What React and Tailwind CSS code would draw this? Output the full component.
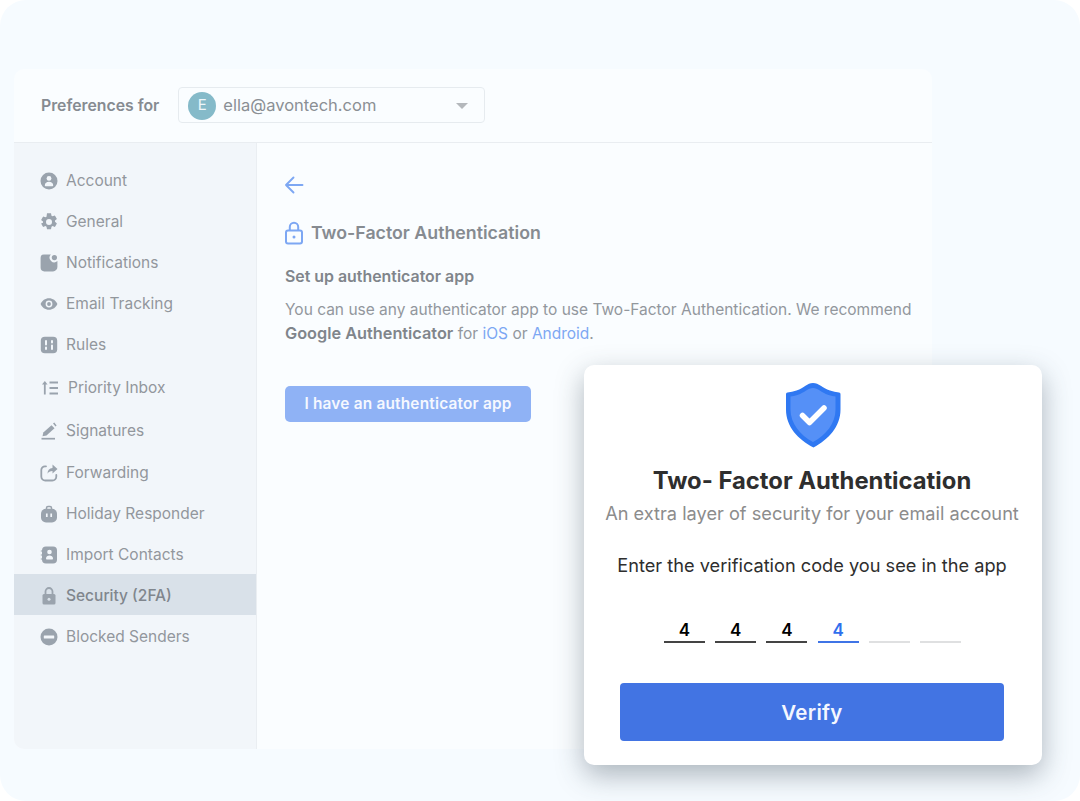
import React from 'react';

const Account = () => (
  <svg viewBox="0 0 18 18" className="w-[18px] h-[18px]">
    <circle cx="9" cy="9" r="8.500" fill="#9aa3ad" />
    <circle cx="9" cy="6.400" r="2.400" fill="#f2f6fa" />
    <path d="M4.800 13.200c0-2.200 1.900-3.400 4.200-3.400s4.200 1.200 4.200 3.400c0 .6-.4 1-1 1H5.800c-.6 0-1-.4-1-1z" fill="#f2f6fa" />
  </svg>
);

const Gear = () => (
  <svg viewBox="0 0 18 18" className="w-[18px] h-[18px]">
    <path fillRule="evenodd" fill="#9aa3ad" d="M7 .2h4l.5 2.500 1 .6 2.400-.8 2 3.400-1.900 1.700v1.200l1.900 1.700-2 3.400-2.400-.8-1 .6-.5 2.500H7l-.5-2.500-1-.6-2.400.8-2-3.400L3 9.800V8.600L1.100 6.900l2-3.400 2.400.8 1-.6zM9 6a3 3 0 1 0 0 6 3 3 0 0 0 0-6z" />
  </svg>
);

const Bell = () => (
  <svg viewBox="0 0 18 18" className="w-[18px] h-[18px]">
    <path fill="#9aa3ad" d="M4 .6h6.900A4.600 4.600 0 0 0 17.400 7.100V13a4.400 4.400 0 0 1-4.400 4.400H4.400A3.800 3.800 0 0 1 .6 13.600V4A3.400 3.400 0 0 1 4 .6z" />
    <circle cx="14.400" cy="3.600" r="2.600" fill="#9aa3ad" />
  </svg>
);

const Eye = () => (
  <svg viewBox="0 0 18 18" className="w-[18px] h-[18px]">
    <path fillRule="evenodd" fill="#9aa3ad" d="M9 3.200c3.800 0 7 2.400 8.400 5.800-1.400 3.400-4.600 5.800-8.400 5.800S2 12.400.6 9C2 5.600 5.200 3.200 9 3.200zm0 2.400a3.400 3.400 0 1 0 0 6.800 3.400 3.400 0 0 0 0-6.800zm0 1.500a1.900 1.900 0 1 1 0 3.800 1.900 1.900 0 0 1 0-3.800z" />
  </svg>
);

const Rules = () => (
  <svg viewBox="0 0 18 18" className="w-[18px] h-[18px]">
    <rect x="0.800" y="0.800" width="16.400" height="16.400" rx="4" fill="#9aa3ad" />
    <path d="M6 5v3.500M12 9.500V13" stroke="#f2f6fa" strokeWidth="2" strokeLinecap="round" />
    <path d="M6 11.500v1.500M12 5v1.500" stroke="#f2f6fa" strokeWidth="2" strokeLinecap="round" />
  </svg>
);

const Priority = () => (
  <svg viewBox="0 0 18 18" className="w-[18px] h-[18px]">
    <path d="M3.800 15.500V4" stroke="#9aa3ad" strokeWidth="1.800" />
    <path d="M1 5.500L3.800 2l2.800 3.500z" fill="#9aa3ad" />
    <path d="M8.500 3.500h8.500M8.500 9h8.500M8.500 14.500h8.500" stroke="#9aa3ad" strokeWidth="2" />
  </svg>
);

const Pen = () => (
  <svg viewBox="0 0 18 18" className="w-[18px] h-[18px]">
    <path fill="#9aa3ad" d="M11.500 3.200l3 3-8 7.300-4 .8.800-3.800z" />
    <path d="M13 1.600l1.300-1 2.300 2.900-1.100 1z" fill="#9aa3ad" />
    <path d="M1.500 16.700h13.500" stroke="#9aa3ad" strokeWidth="1.700" />
  </svg>
);

const Forward = () => (
  <svg viewBox="0 0 18 18" className="w-[18px] h-[18px]">
    <path d="M6 2.300H5A3.700 3.700 0 0 0 1.300 6v6.500A4 4 0 0 0 5.300 16.500h7a4 4 0 0 0 4-4v-1.500" fill="none" stroke="#9aa3ad" strokeWidth="1.800" strokeLinecap="round" />
    <path fill="#9aa3ad" d="M12.500 0.600l5 4.400-5 4.400V7c-2.500 0-4 .8-5 2.800 0-3.500 1.800-5.600 5-5.800z" />
  </svg>
);

const Bag = () => (
  <svg viewBox="0 0 18 18" className="w-[18px] h-[18px]">
    <path d="M6.500 4.500V3a1.500 1.500 0 0 1 1.500-1.500h2A1.500 1.500 0 0 1 11.500 3v1.500" fill="none" stroke="#9aa3ad" strokeWidth="1.500" />
    <rect x="1" y="3.800" width="16" height="13.700" rx="5" fill="#9aa3ad" />
    <path d="M6.800 8.500v3.500M11.200 8.500v3.500" stroke="#f2f6fa" strokeWidth="1.700" />
  </svg>
);

const Contacts = () => (
  <svg viewBox="0 0 18 18" className="w-[18px] h-[18px]">
    <rect x="2" y="0.500" width="15" height="17" rx="4" fill="#9aa3ad" />
    <path d="M0.800 5h2M0.800 9h2M0.800 13h2" stroke="#9aa3ad" strokeWidth="1.200" />
    <circle cx="9.500" cy="6" r="2.300" fill="#f2f6fa" />
    <path d="M6 12.600c0-2 1.600-3.200 3.500-3.200s3.500 1.200 3.500 3.200c0 .6-.3.900-.8.900H6.800c-.5 0-.8-.3-.8-.9z" fill="#f2f6fa" />
  </svg>
);

const Lock = () => (
  <svg viewBox="0 0 18 18" className="w-[18px] h-[18px]">
    <path d="M5.500 7.500V4.500a3.500 3.500 0 0 1 7 0v3" fill="none" stroke="#9aa3ad" strokeWidth="1.800" />
    <rect x="2.500" y="7" width="13" height="10.500" rx="1.500" fill="#9aa3ad" />
    <circle cx="9" cy="12.200" r="1.500" fill="#d9e1e9" />
  </svg>
);

const Blocked = () => (
  <svg viewBox="0 0 18 18" className="w-[18px] h-[18px]">
    <circle cx="9" cy="9" r="8.500" fill="#9aa3ad" />
    <rect x="3.800" y="7.500" width="10.400" height="3" rx="0.500" fill="#f2f6fa" />
  </svg>
);

const menu = [
  { label: 'Account', icon: <Account />, h: 'h-[41px]' },
  { label: 'General', icon: <Gear />, h: 'h-[41px]' },
  { label: 'Notifications', icon: <Bell />, h: 'h-[41px]' },
  { label: 'Email Tracking', icon: <Eye />, h: 'h-[41px]' },
  { label: 'Rules', icon: <Rules />, h: 'h-[41px]' },
  { label: 'Priority Inbox', icon: <Priority />, h: 'h-[45px]', gap: 'pl-[27px]' },
  { label: 'Signatures', icon: <Pen />, h: 'h-[42px]' },
  { label: 'Forwarding', icon: <Forward />, h: 'h-[41px]' },
  { label: 'Holiday Responder', icon: <Bag />, h: 'h-[41px]' },
  { label: 'Import Contacts', icon: <Contacts />, h: 'h-[41px]' },
  { label: 'Security (2FA)', icon: <Lock />, h: 'h-[41px]', active: true },
  { label: 'Blocked Senders', icon: <Blocked />, h: 'h-[41px]' },
];

const code = [
  { v: '4', line: 'bg-[#444]', text: 'text-black' },
  { v: '4', line: 'bg-[#444]', text: 'text-black' },
  { v: '4', line: 'bg-[#444]', text: 'text-black' },
  { v: '4', line: 'bg-[#3f74e6]', text: 'text-[#2f6fed]' },
  { v: '', line: 'bg-[#dfe0e1]', text: 'text-black' },
  { v: '', line: 'bg-[#dfe0e1]', text: 'text-black' },
];

export default function App() {
  return (
    <div className="w-[1080px] h-[801px] bg-white overflow-hidden font-['Inter',sans-serif]">
      <div className="relative w-full h-full rounded-[26px] bg-[#f6fbff] pt-[69px] pl-[14px]">
        {/* settings window, washed out behind the dialog */}
        <div className="w-[918px] h-[680px] rounded-[10px] bg-[#fafdff] overflow-hidden flex flex-col">
          <div className="h-[74px] shrink-0 border-b border-[#e9edf1] flex items-center pl-[27px]">
            <span className="text-[15.8px] font-semibold text-[#868b91]">Preferences for</span>
            <div className="ml-[19px] -mt-[1px] w-[307px] h-[36px] rounded-[4px] border border-[#e6ebef] flex items-center pl-[9px] pt-[1px]">
              <span className="w-[28px] h-[28px] rounded-full bg-[#85bac9] text-[#eef7fa] text-[15px] flex items-center justify-center">E</span>
              <span className="ml-[7px] text-[16.5px] text-[#8a8f94]">ella@avontech.com</span>
              <span className="ml-auto mr-[16px] w-0 h-0 border-l-[6px] border-r-[6px] border-t-[6px] border-l-transparent border-r-transparent border-t-[#b4b8bc]" />
            </div>
          </div>
          <div className="flex flex-1">
            <div className="w-[243px] shrink-0 bg-[#f2f6fa] border-r border-[#eaeef2] pt-[16px]">
              {menu.map((item) => (
                <div
                  key={item.label}
                  className={`flex items-center pt-[2px] ${item.h} ${item.gap || 'gap-[8px] pl-[26px]'} ${item.active ? 'bg-[#d9e1e9] font-medium text-[#80868d]' : 'text-[#92979d]'} text-[15.5px]`}
                >
                  {item.icon}
                  <span className={item.gap ? 'ml-[9px]' : ''}>{item.label}</span>
                </div>
              ))}
            </div>
            <div className="flex-1 pl-[28px] pt-[32px]">
              <svg viewBox="0 0 20 20" className="w-[20px] h-[20px] block -ml-[1px]" fill="none" stroke="#7da7f3" strokeWidth="1.900" strokeLinecap="round" strokeLinejoin="round">
                <path d="M18.500 10H2M9.500 2.500L2 10l7.500 7.500" />
              </svg>
              <div className="flex items-center mt-[25px] h-[26px]">
                <svg viewBox="0 0 18 24" className="w-[18px] h-[24px]" fill="none" stroke="#7da7f3" strokeWidth="2">
                  <path d="M4.800 9.500V6a4.200 4.200 0 0 1 8.400 0v3.500" />
                  <rect x="1" y="9.500" width="16" height="13" rx="2" />
                  <circle cx="9" cy="16" r="1.500" fill="#7da7f3" stroke="none" />
                </svg>
                <span className="ml-[8px] text-[17.75px] font-semibold text-[#868b91]">Two-Factor Authentication</span>
              </div>
              <div className="mt-[19px] text-[15.9px] font-semibold text-[#80858b]">Set up authenticator app</div>
              <p className="mt-[9px] w-[640px] text-[15.5px] leading-[24px] text-[#92979d]">
                You can use any authenticator app to use Two-Factor Authentication. We recommend{' '}
                <span className="text-[16.3px] leading-[22px] font-semibold text-[#80858b]">Google Authenticator</span> for{' '}
                <span className="text-[#7da7f3]">iOS</span> or <span className="text-[#7da7f3]">Android</span>.
              </p>
              <button className="mt-[40px] w-[246px] h-[36px] rounded-[5px] bg-[#8fb2f5] text-[15.4px] font-semibold tracking-[0.2px] text-[#f5f8ff]">
                I have an authenticator app
              </button>
            </div>
          </div>
        </div>

        {/* verification dialog */}
        <div className="absolute left-[584px] top-[365px] w-[458px] h-[400px] rounded-[10px] bg-white shadow-[0_10px_28px_rgba(50,65,80,0.38)] flex flex-col items-center pt-[17px] pr-[2px]">
          <svg viewBox="0 0 56 66" className="w-[56px] h-[66px] ml-[2px]">
            <path fill="#2f78f2" d="M28 1c6 0 9 5 17 7.500 3 1 6 1.500 9 2 1 .2 1.500.8 1.500 2v15c0 17-12 30-27 38C13 57.500 1 44.500 1 27.500v-15c0-1.200.5-1.800 1.500-2 3-.5 6-1 9-2C19.500 6 22 1 28 1z" />
            <path fill="#5590f7" d="M28 6c5 0 8 4.500 15.500 7 2.500.8 5 1.300 7 1.600v13c0 14-9.500 25.500-22.500 32.500C15 53 5.500 41.500 5.500 27.600v-13c2-.3 4.500-.8 7-1.600C20 10.500 23 6 28 6z" />
            <path d="M17.500 33.500l7 7L39 26" fill="none" stroke="#fff" strokeWidth="5.500" strokeLinecap="round" strokeLinejoin="round" />
          </svg>
          <div className="mt-[18px] text-[23.8px] leading-[30px] font-bold text-[#2e2e2e]">Two- Factor Authentication</div>
          <div className="mt-[4px] text-[18.2px] leading-[26px] text-[#8c8c8c]">An extra layer of security for your email account</div>
          <div className="mt-[26px] text-[18.2px] leading-[26px] text-[#2e2e2e]">Enter the verification code you see in the app</div>
          <div className="mt-[41px] ml-[1px] flex gap-[10.2px]">
            {code.map((c, i) => (
              <div key={i} className="w-[41px] flex flex-col items-center">
                <span className={`h-[20px] text-[17px] leading-[22px] font-semibold ${c.text}`}>{c.v}</span>
                <span className={`mt-[2px] w-full h-[2px] ${c.line}`} />
              </div>
            ))}
          </div>
          <button className="mt-[40px] w-[384px] h-[58px] pt-[3px] rounded-[4px] bg-[#4274e3] text-[20.5px] font-semibold tracking-[0.3px] text-[#f4f7ff]">
            Verify
          </button>
        </div>
      </div>
    </div>
  );
}
